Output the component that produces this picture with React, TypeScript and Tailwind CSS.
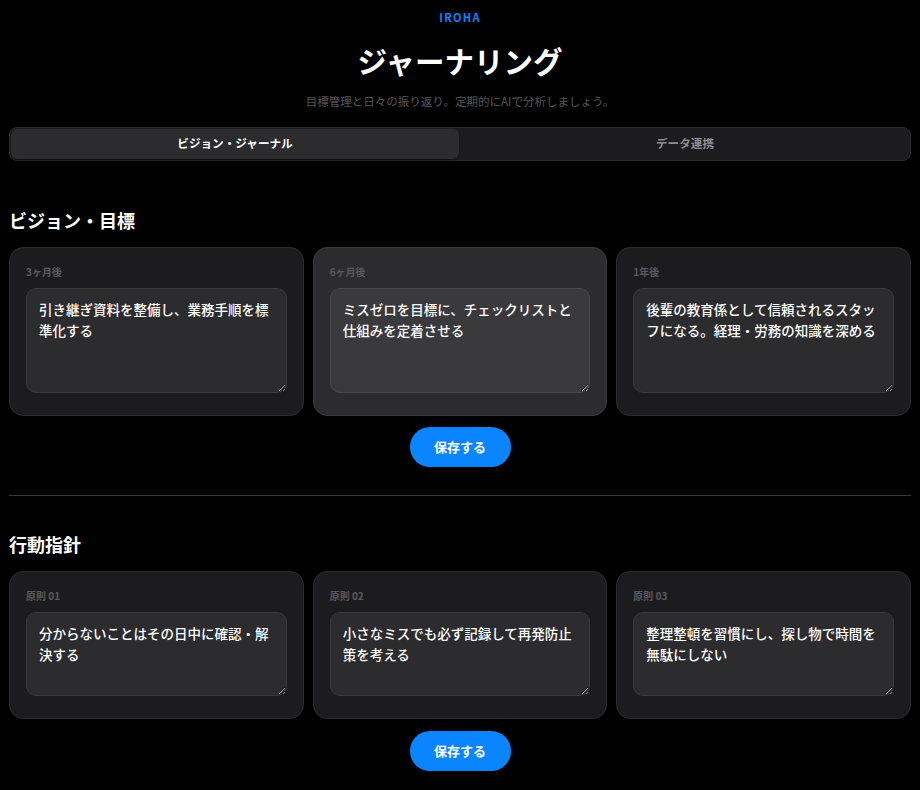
import { useState } from "react";

type Item = { label: string; text: string };

const visions: Item[] = [
	{ label: "3ヶ月後", text: "引き継ぎ資料を整備し、業務手順を標準化する" },
	{ label: "6ヶ月後", text: "ミスゼロを目標に、チェックリストと仕組みを定着させる" },
	{ label: "1年後", text: "後輩の教育係として信頼されるスタッフになる。経理・労務の知識を深める" },
];

const principles: Item[] = [
	{ label: "原則 01", text: "分からないことはその日中に確認・解決する" },
	{ label: "原則 02", text: "小さなミスでも必ず記録して再発防止策を考える" },
	{ label: "原則 03", text: "整理整頓を習慣にし、探し物で時間を無駄にしない" },
];

const font = "font-['Noto_Sans_CJK_JP','Noto_Sans',sans-serif]";

function Card({ item, tall, active }: { item: Item; tall: boolean; active?: boolean }) {
	const [value, setValue] = useState(item.text);
	return (
		<div
			className={`rounded-[14px] border px-4 pt-4 pb-[22px] ${
				active ? "bg-[#2c2c2e] border-[#3a3a3c]" : "bg-[#1c1c1e] border-[#2c2c2e]"
			}`}
		>
			<div className="text-[10px] leading-[15px] font-bold text-[#5a5a5e] mb-[9px]">{item.label}</div>
			<textarea
				value={value}
				onChange={(e) => setValue(e.target.value)}
				className={`block w-full ${tall ? "h-[105px]" : "h-[84px]"} rounded-[10px] border px-3 py-[10px] text-[13.5px] leading-[21px] font-medium text-white outline-none [color-scheme:dark] ${
					active ? "bg-[#3a3a3c] border-[#48484a]" : "bg-[#2c2c2e] border-[#3a3a3c]"
				}`}
			/>
		</div>
	);
}

function SaveButton({ top }: { top: string }) {
	return (
		<div className={`flex justify-center ${top}`}>
			<button
				type="button"
				className="h-10 w-[101px] rounded-full bg-[#0a84ff] text-white text-[13px] font-bold"
			>
				保存する
			</button>
		</div>
	);
}

export default function App() {
	const [tab, setTab] = useState(0);

	return (
		<div className={`min-h-[790px] bg-black text-white px-[9px] pt-[9px] pb-6 ${font}`}>
			<div className="text-center text-[11px] leading-4 font-bold tracking-[0.12em] text-[#0a84ff]">IROHA</div>
			<h1 className="mt-[17px] text-center text-[29.5px] leading-9 font-bold">ジャーナリング</h1>
			<p className="mt-[15px] text-center text-[11.5px] leading-4 text-[#56565a]">
				目標管理と日々の振り返り。定期的にAIで分析しましょう。
			</p>

			<div className="mt-[18px] grid grid-cols-2 gap-[2px] rounded-lg border border-[#2c2c2e] bg-[#1c1c1e] p-[1px]">
				{["ビジョン・ジャーナル", "データ連携"].map((t, i) => (
					<button
						key={t}
						type="button"
						onClick={() => setTab(i)}
						className={`h-[30px] rounded-md text-[11.6px] font-bold ${
							tab === i ? "bg-[#2c2c2e] text-white shadow-[0_1px_2px_rgba(0,0,0,0.5)]" : "text-[#8e8e93]"
						}`}
					>
						{t}
					</button>
				))}
			</div>

			<h2 className="mt-[47px] text-lg leading-6 font-bold">ビジョン・目標</h2>
			<div className="mt-[15px] grid grid-cols-3 gap-[9px]">
				{visions.map((v, i) => (
					<Card key={v.label} item={v} tall active={i === 1} />
				))}
			</div>
			<SaveButton top="mt-[11px]" />

			<div className="mt-[28px] h-px bg-[#3a3a3c]" />

			<h2 className="mt-[36px] text-lg leading-6 font-bold">行動指針</h2>
			<div className="mt-[15px] grid grid-cols-3 gap-[9px]">
				{principles.map((p) => (
					<Card key={p.label} item={p} tall={false} />
				))}
			</div>
			<SaveButton top="mt-[12px]" />
		</div>
	);
}
